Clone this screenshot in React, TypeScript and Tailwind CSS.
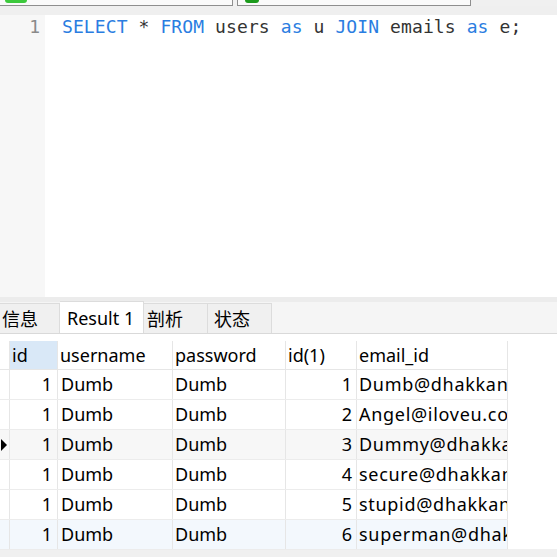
import React from "react";

const rows = [
  { id: 1, u: "Dumb", p: "Dumb", id1: 1, e: "Dumb@dhakkan.com", bg: "bg-white" },
  { id: 1, u: "Dumb", p: "Dumb", id1: 2, e: "Angel@iloveu.com", bg: "bg-white" },
  { id: 1, u: "Dumb", p: "Dumb", id1: 3, e: "Dummy@dhakkan.com", bg: "bg-[#f7f7f7]", sel: true },
  { id: 1, u: "Dumb", p: "Dumb", id1: 4, e: "secure@dhakkan.com", bg: "bg-white" },
  { id: 1, u: "Dumb", p: "Dumb", id1: 5, e: "stupid@dhakkan.com", bg: "bg-white" },
  { id: 1, u: "Dumb", p: "Dumb", id1: 6, e: "superman@dhakkan.com", bg: "bg-[#f3f8fd]" },
];

const font = { fontFamily: '"Noto Sans", "Noto Sans CJK SC", sans-serif' };

export default function App() {
  return (
    <div className="w-[557px] h-[557px] overflow-hidden bg-[#f0f0f0] flex flex-col" style={font}>
      {/* toolbar remnants */}
      <div className="h-[6px] flex shrink-0">
        <div className="w-[233px] h-[6px] bg-[#fafafa] border-b border-r border-[#8e8e8e] relative">
          <div className="absolute left-[5px] top-0 w-[22px] h-[3px] bg-[#3cc93c] rounded-b-[3px]" />
        </div>
        <div className="w-[4px]" />
        <div className="w-[234px] h-[6px] bg-[#fafafa] border-b border-l border-r border-[#8e8e8e] relative">
          <div className="absolute left-[7px] top-0 w-[14px] h-[3px] bg-[#1b9a1b] rounded-b-full" />
        </div>
      </div>
      <div className="h-[9px] shrink-0 bg-[#efefef]" />
      {/* editor */}
      <div className="h-[282px] shrink-0 flex bg-white">
        <div className="w-[45px] bg-[#f7f7f7] pr-[5px] pt-0 text-right text-[18px] leading-[24px] text-[#8a8a8a]" style={{ fontFamily: '"DejaVu Sans Mono", monospace' }}>
          1
        </div>
        <div className="flex-1 pl-[17px] pt-0 text-[18px] leading-[24px] tracking-[0.1px] text-[#333] whitespace-pre" style={{ fontFamily: '"DejaVu Sans Mono", monospace' }}>
          <span className="text-[#2a7de1]">SELECT</span> * <span className="text-[#2a7de1]">FROM</span> users <span className="text-[#2a7de1]">as</span> u <span className="text-[#2a7de1]">JOIN</span> emails <span className="text-[#2a7de1]">as</span> e;
        </div>
      </div>
      <div className="h-[5px] shrink-0 bg-[#ececec]" />
      {/* tabs */}
      <div className="h-[32px] shrink-0 flex items-end bg-[#f5f5f5] border-b border-[#d9d9d9] text-[18px] text-black">
        <div className="w-[60px] h-[30px] pl-[2px] bg-[#f0f0f0] border-t border-r border-[#dcdcdc] flex items-center leading-none">信息</div>
        <div className="w-[84px] h-[32px] pl-[7px] bg-white border-t border-r border-[#dcdcdc] flex items-center leading-none">Result 1</div>
        <div className="w-[64px] h-[30px] pl-[3px] bg-[#f0f0f0] border-t border-r border-[#dcdcdc] flex items-center leading-none">剖析</div>
        <div className="w-[64px] h-[30px] pl-[6px] bg-[#f0f0f0] border-t border-r border-[#dcdcdc] flex items-center leading-none">状态</div>
      </div>
      {/* grid */}
      <div className="h-[215px] shrink-0 bg-white pt-[7px] text-[18px] text-black">
        <div className="w-[508px] flex h-[29px] border-b border-[#e6e6e6]">
          <div className="w-[10px] border-r border-[#e6e6e6]" />
          <div className="w-[48px] border-r border-[#e6e6e6] bg-[#d9e8f7] pl-[2px] flex items-center">id</div>
          <div className="w-[115px] border-r border-[#e6e6e6] pl-[2px] flex items-center">username</div>
          <div className="w-[113px] border-r border-[#e6e6e6] pl-[2px] flex items-center">password</div>
          <div className="w-[71px] border-r border-[#e6e6e6] pl-[2px] flex items-center">id(1)</div>
          <div className="w-[151px] border-r border-[#e6e6e6] pl-[2px] flex items-center">email_id</div>
        </div>
        {rows.map((r, i) => (
          <div key={i} className={`w-[508px] flex h-[30px] border-b border-[#ececec] ${r.bg}`}>
            <div className="w-[10px] border-r border-[#e6e6e6] flex items-center">
              {r.sel ? (
                <svg width="7" height="12" viewBox="0 0 7 12" className="ml-[1px]">
                  <polygon points="0,0 6,6 0,12" fill="#000" />
                </svg>
              ) : null}
            </div>
            <div className="w-[48px] border-r border-[#e6e6e6] pr-[5px] flex items-center justify-end">{r.id}</div>
            <div className="w-[115px] border-r border-[#e6e6e6] pl-[3px] flex items-center">{r.u}</div>
            <div className="w-[113px] border-r border-[#e6e6e6] pl-[2px] flex items-center">{r.p}</div>
            <div className="w-[71px] border-r border-[#e6e6e6] pr-[4px] flex items-center justify-end">{r.id1}</div>
            <div className="w-[151px] border-r border-[#e6e6e6] pl-[2px] flex items-center overflow-hidden whitespace-nowrap tracking-[0.7px]">{r.e}</div>
          </div>
        ))}
      </div>
    </div>
  );
}
